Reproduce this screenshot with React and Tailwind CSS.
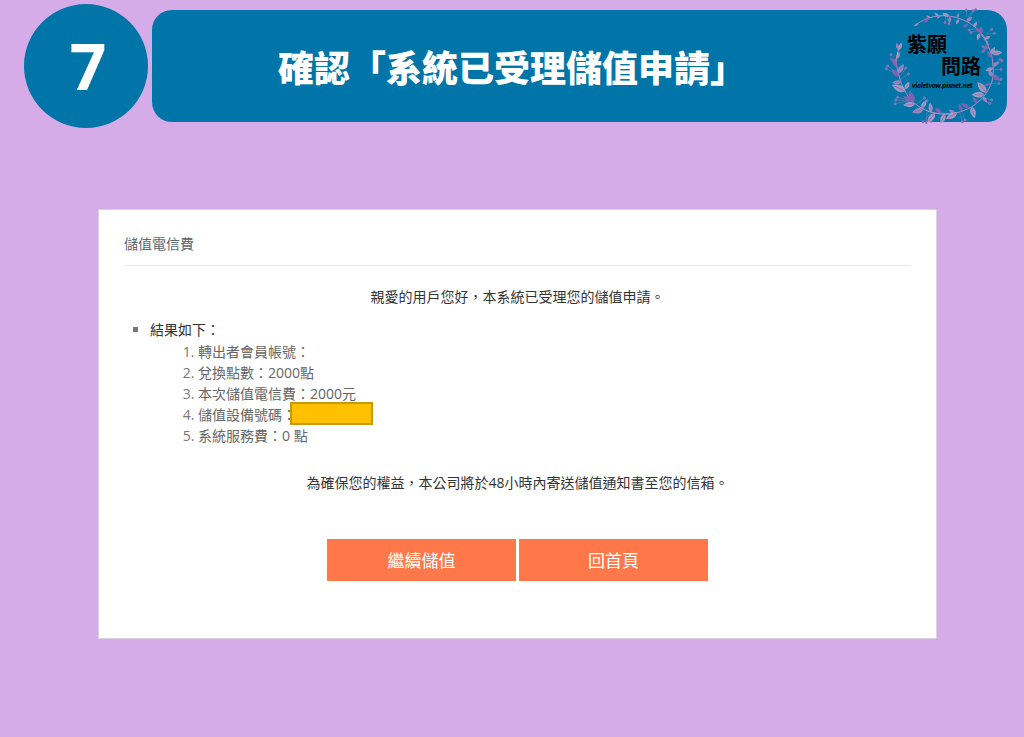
import React from 'react'

const pink = '#b48cc4'
const plum = '#8a63b3'
const rose = '#bfa0c4'

// x, y, angle, size, colour
const leaves = [
  [146, 74, 160, 14, pink],
  [178, 58, 165, 18, plum],
  [182, 56, -150, 15, rose],
  [176, 60, 140, 16, plum],
  [206, 50, -140, 16, rose],
  [212, 48, 135, 14, pink],
  [238, 50, 200, 22, rose],
  [240, 52, 90, 20, pink],
  [262, 56, -70, 16, pink],
  [268, 60, 120, 18, rose],
  [290, 66, -35, 22, pink],
  [296, 74, 150, 20, plum],
  [312, 84, -60, 20, rose],
  [318, 88, 30, 22, plum],
  [330, 102, 110, 22, rose],
  [334, 106, -90, 26, plum],
  [344, 118, -20, 20, rose],
  [354, 138, 125, 24, plum],
  [364, 164, -60, 24, rose],
  [366, 162, -5, 32, rose],
  [368, 176, -130, 26, plum],
  [370, 200, -35, 22, pink],
  [370, 206, 160, 24, rose],
  [370, 226, 40, 28, plum],
  [368, 232, -120, 24, pink],
  [362, 254, 170, 20, plum],
  [350, 280, -130, 42, rose],
  [344, 286, 180, 38, rose],
  [340, 292, 55, 22, pink],
  [322, 312, -120, 24, plum],
  [306, 322, 75, 36, rose],
  [298, 326, -150, 28, plum],
  [276, 336, -110, 24, plum],
  [262, 340, 150, 38, rose],
  [256, 342, -150, 22, pink],
  [226, 344, 115, 32, rose],
  [216, 342, -140, 26, plum],
  [196, 342, 130, 36, rose],
  [184, 338, -95, 28, rose],
  [162, 330, 165, 36, pink],
  [156, 326, -60, 28, rose],
  [136, 314, 175, 36, rose],
  [132, 310, -110, 40, plum],
  [126, 306, -150, 30, plum],
  [108, 276, -155, 46, rose],
  [106, 270, -60, 26, rose],
  [94, 248, 175, 26, pink],
  [88, 232, -135, 32, plum],
  [86, 222, -60, 32, pink],
  [80, 204, -110, 28, plum],
  [80, 192, -140, 26, plum],
  [82, 178, -70, 22, rose],
  [84, 152, -55, 24, rose],
  [84, 148, -100, 18, pink],
]

// stem start x, y, then berry x, y
const berries = [
  [232, 50, 238, 74],
  [228, 50, 226, 70],
  [292, 60, 310, 34],
  [298, 56, 318, 30],
  [292, 52, 290, 32],
  [320, 88, 298, 92],
  [324, 92, 304, 100],
  [350, 102, 366, 90],
  [352, 104, 374, 102],
  [356, 124, 340, 156],
  [366, 150, 340, 142],
  [368, 200, 392, 180],
  [372, 204, 398, 184],
  [370, 212, 394, 210],
  [366, 242, 394, 240],
  [362, 252, 388, 252],
  [340, 294, 366, 302],
  [336, 298, 360, 312],
  [278, 340, 286, 362],
  [272, 342, 278, 368],
  [182, 342, 160, 368],
  [190, 344, 184, 366],
  [172, 338, 170, 370],
  [122, 306, 78, 302],
  [116, 304, 76, 314],
  [118, 302, 84, 294],
  [140, 316, 164, 296],
  [150, 320, 172, 304],
  [88, 236, 108, 206],
  [90, 242, 116, 224],
  [76, 222, 50, 208],
  [76, 218, 54, 200],
  [78, 180, 64, 166],
]

function Wreath() {
  return (
    <svg viewBox="40 20 372 360" className="h-[120px] w-[124px]" aria-hidden="true">
      <g fill="none" stroke={pink} strokeWidth="3" strokeLinecap="round">
        <path d="M136 78 C170 52 210 44 250 52 C310 66 340 100 356 136" />
        <path d="M334 104 C362 140 374 180 370 232 C362 280 322 326 262 340 C230 346 200 346 170 334" />
        <path d="M236 344 C180 346 130 322 106 276 C92 250 84 220 78 182" />
        <path d="M78 196 C80 170 86 150 94 132" />
      </g>
      <g stroke={pink} strokeOpacity="0.7" strokeWidth="1.5" fill={plum}>
        {berries.map(([x1, y1, x2, y2], i) => (
          <g key={i}>
            <line x1={x1} y1={y1} x2={x2} y2={y2} />
            <circle cx={x2} cy={y2} r="3.5" />
          </g>
        ))}
      </g>
      {leaves.map(([x, y, angle, size, color], i) => (
        <g key={i} transform={`translate(${x} ${y}) rotate(${angle}) scale(${size / 30})`}>
          <path d="M0 0 C8 -9 16 -9 30 0 C16 9 8 9 0 0 Z" fill={color} fillOpacity="0.85" />
          <path d="M2 0 L24 0" stroke={plum} strokeWidth="1.5" />
        </g>
      ))}
    </svg>
  )
}

function Logo() {
  return (
    <div className="absolute -top-1 right-0 font-['Noto_Sans_CJK_TC',sans-serif] font-bold text-black">
      <Wreath />
      <div className="absolute left-6 top-[27px] w-20">
        <p className="text-[20px] leading-[22px]">紫願</p>
        <p className="pl-[34px] text-[20px] leading-[22px]">問路</p>
        <p className="mt-1 pl-[5px] font-['Lato',sans-serif] text-[7px] font-black italic leading-[8px]">
          violetvow.pixnet.net
        </p>
      </div>
    </div>
  )
}

function App() {
  return (
    <div
      lang="zh-Hant"
      className="min-h-screen bg-[#d5abe8] font-['Open_Sans','Noto_Sans_CJK_TC',sans-serif]"
    >
      <header className="flex items-center gap-1 pb-[81px] pl-6 pr-[17px] pt-1">
        <div className="flex size-[124px] shrink-0 items-center justify-center rounded-full bg-[#0275a8] pl-1 text-[64px] font-bold leading-none text-white">
          7
        </div>
        <div className="relative flex h-28 flex-1 items-center justify-center rounded-[20px] bg-[#0275a8] pr-[135px]">
          <h1 className="font-['Noto_Sans_CJK_TC',sans-serif] text-4xl font-black text-white">
            確認「系統已受理儲值申請」
          </h1>
          <Logo />
        </div>
      </header>

      <main className="ml-[98px] mr-[87px] border border-[#dccfe3] bg-white px-[25px] pb-[57px] pt-[23px] text-sm leading-[21px] text-[#333]">
        <h2 className="border-b border-[#e6e6e6] pb-[11px] text-[#5c6670]">儲值電信費</h2>

        <p className="mt-5 text-center">親愛的用戶您好，本系統已受理您的儲值申請。</p>

        <ul className="mt-3 list-[square] pl-[26px] marker:text-[#777]">
          <li>
            結果如下：
            <ol className="mt-px list-decimal pl-12 text-[#666] marker:text-[#666]">
              <li>轉出者會員帳號：</li>
              <li>兌換點數：2000點</li>
              <li>本次儲值電信費：2000元</li>
              <li className="relative">
                儲值設備號碼：
                <span className="absolute -top-0.5 left-[92px] h-[23px] w-[83px] border-2 border-[#c9980c] bg-[#ffc000]" />
              </li>
              <li>系統服務費：0 點</li>
            </ol>
          </li>
        </ul>

        <p className="mt-[26px] text-center">
          為確保您的權益，本公司將於48小時內寄送儲值通知書至您的信箱。
        </p>

        <div className="mt-[46px] flex justify-center gap-[3px]">
          <button type="button" className="h-[42px] w-[189px] bg-[#ff7849] text-[17px] text-white">
            繼續儲值
          </button>
          <button type="button" className="h-[42px] w-[189px] bg-[#ff7849] text-[17px] text-white">
            回首頁
          </button>
        </div>
      </main>
    </div>
  )
}

export default App
